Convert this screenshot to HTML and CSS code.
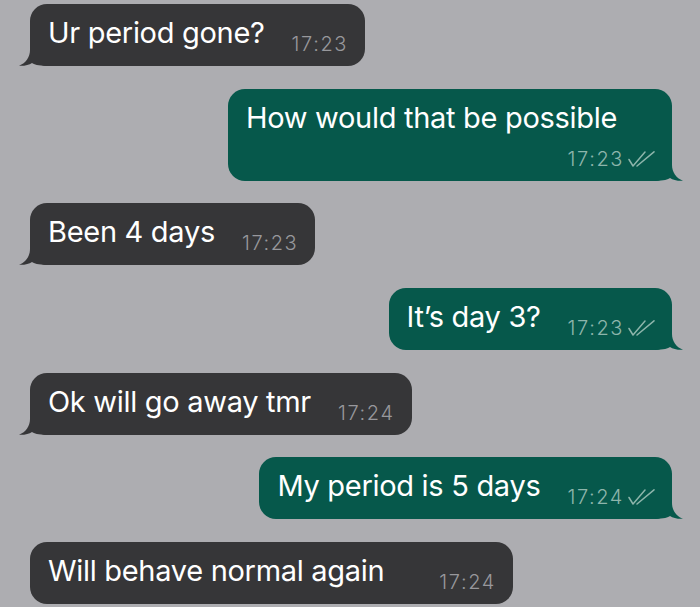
FILE: index.html
```html
<html>
<head>
<title>Chat</title>
  <link rel="stylesheet" href="styles.css">
</head>

<body>
<div id="chat">

  <div class="msg in">
    <span class="text">Ur period gone?</span>
    <span class="meta"><span class="time">17:23</span></span>
    <svg class="tail" width="28" height="22" viewBox="0 0 28 22"><path d="M11 0 L11 6 C11 13 7 19 0 21.8 C6 22 10 21 13 19 C15 20.5 19 21.6 28 22 L28 0 Z"/></svg>
  </div>

  <div class="msg out">
    <span class="text">How would that be possible</span>
    <span class="meta">
      <span class="time">17:23</span>
      <svg class="ticks" width="27" height="16" viewBox="0 0 27 16"><path d="M1 8.5 L5 15 L17 1 M9 15 L26 0.8"/></svg>
    </span>
    <svg class="tail" width="28" height="22" viewBox="0 0 28 22"><path d="M11 0 L11 6 C11 13 7 19 0 21.8 C6 22 10 21 13 19 C15 20.5 19 21.6 28 22 L28 0 Z"/></svg>
  </div>

  <div class="msg in">
    <span class="text">Been 4 days</span>
    <span class="meta"><span class="time">17:23</span></span>
    <svg class="tail" width="28" height="22" viewBox="0 0 28 22"><path d="M11 0 L11 6 C11 13 7 19 0 21.8 C6 22 10 21 13 19 C15 20.5 19 21.6 28 22 L28 0 Z"/></svg>
  </div>

  <div class="msg out">
    <span class="text">It’s day 3?</span>
    <span class="meta">
      <span class="time">17:23</span>
      <svg class="ticks" width="27" height="16" viewBox="0 0 27 16"><path d="M1 8.5 L5 15 L17 1 M9 15 L26 0.8"/></svg>
    </span>
    <svg class="tail" width="28" height="22" viewBox="0 0 28 22"><path d="M11 0 L11 6 C11 13 7 19 0 21.8 C6 22 10 21 13 19 C15 20.5 19 21.6 28 22 L28 0 Z"/></svg>
  </div>

  <div class="msg in">
    <span class="text">Ok will go away tmr</span>
    <span class="meta"><span class="time">17:24</span></span>
    <svg class="tail" width="28" height="22" viewBox="0 0 28 22"><path d="M11 0 L11 6 C11 13 7 19 0 21.8 C6 22 10 21 13 19 C15 20.5 19 21.6 28 22 L28 0 Z"/></svg>
  </div>

  <div class="msg out">
    <span class="text">My period is 5 days</span>
    <span class="meta">
      <span class="time">17:24</span>
      <svg class="ticks" width="27" height="16" viewBox="0 0 27 16"><path d="M1 8.5 L5 15 L17 1 M9 15 L26 0.8"/></svg>
    </span>
    <svg class="tail" width="28" height="22" viewBox="0 0 28 22"><path d="M11 0 L11 6 C11 13 7 19 0 21.8 C6 22 10 21 13 19 C15 20.5 19 21.6 28 22 L28 0 Z"/></svg>
  </div>

  <!-- follow-up message, no tail -->
  <div class="msg in">
    <span class="text">Will behave normal again</span>
    <span class="meta wide"><span class="time">17:24</span></span>
  </div>

</div>
</body>
</html>
```

FILE: styles.css
```css
body{
  margin: 0;
  background: #adadb1;
  font-family: Inter, "Liberation Sans", sans-serif;
}

#chat{
  display: flex;
  flex-direction: column;
  gap: 22.7px;
  padding: 4px 28px 0 30px;
}

.msg{
  position: relative;
  display: flex;
  flex-wrap: wrap;
  align-items: flex-end;
  padding: 12px 17px 10px 18px;
  border-radius: 17px;
  color: #fff;
}

.msg.in{
  align-self: flex-start;
  max-width: 540px;
  background: #363638;
  fill: #363638;
}

.msg.out{
  align-self: flex-end;
  max-width: 444px;
  box-sizing: border-box;
  background: #06584b;
  fill: #06584b;
}

.text{
  align-self: flex-start;
  font-size: 29px;
  line-height: 34px;
  padding-bottom: 6px;
  letter-spacing: -0.3px;
}

.meta{
  display: flex;
  align-items: center;
  margin-left: auto;
  margin-top: 6px;
  padding-left: 27px;
  line-height: 24px;
}

.meta.wide{
  padding-left: 55px;
}

.time{
  font-size: 20px;
  font-weight: 300;
  letter-spacing: 1.6px;
  color: #98989c;
}

.out .time{
  color: #8db5ab;
}

.ticks{
  margin-left: 4px;
  fill: none;
  stroke: #8db5ab;
  stroke-width: 1.5;
  stroke-linecap: round;
  stroke-linejoin: round;
}

.tail{
  position: absolute;
  bottom: 0;
  left: -11px;
}

.out .tail{
  left: auto;
  right: -11px;
  transform: scaleX(-1);
}
```
